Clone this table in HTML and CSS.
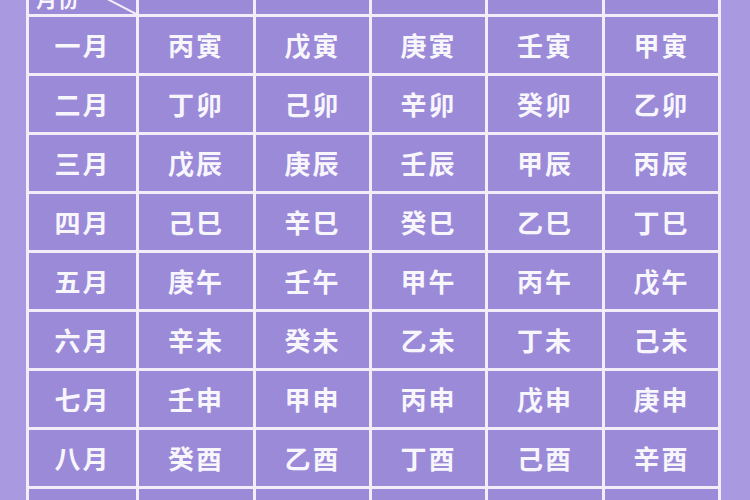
FILE: index.html
```html
<!DOCTYPE html>
<html lang="zh">
<head>
<meta charset="utf-8">
<title>月干表</title>
<link rel="stylesheet" href="styles.css">
</head>
<body>
<div class="table">
  <div class="cell head corner">
    <svg class="diag" viewBox="0 0 100 100" preserveAspectRatio="none"><line x1="0" y1="0" x2="100" y2="100" vector-effect="non-scaling-stroke"/></svg>
    <span class="corner-label">月份</span>
  </div>
  <div class="cell head"></div><div class="cell head"></div><div class="cell head"></div><div class="cell head"></div><div class="cell head"></div>

  <div class="cell">一月</div><div class="cell">丙寅</div><div class="cell">戊寅</div><div class="cell">庚寅</div><div class="cell">壬寅</div><div class="cell">甲寅</div>
  <div class="cell">二月</div><div class="cell">丁卯</div><div class="cell">己卯</div><div class="cell">辛卯</div><div class="cell">癸卯</div><div class="cell">乙卯</div>
  <div class="cell">三月</div><div class="cell">戊辰</div><div class="cell">庚辰</div><div class="cell">壬辰</div><div class="cell">甲辰</div><div class="cell">丙辰</div>
  <div class="cell">四月</div><div class="cell">己巳</div><div class="cell">辛巳</div><div class="cell">癸巳</div><div class="cell">乙巳</div><div class="cell">丁巳</div>
  <div class="cell">五月</div><div class="cell">庚午</div><div class="cell">壬午</div><div class="cell">甲午</div><div class="cell">丙午</div><div class="cell">戊午</div>
  <div class="cell">六月</div><div class="cell">辛未</div><div class="cell">癸未</div><div class="cell">乙未</div><div class="cell">丁未</div><div class="cell">己未</div>
  <div class="cell">七月</div><div class="cell">壬申</div><div class="cell">甲申</div><div class="cell">丙申</div><div class="cell">戊申</div><div class="cell">庚申</div>
  <div class="cell">八月</div><div class="cell">癸酉</div><div class="cell">乙酉</div><div class="cell">丁酉</div><div class="cell">己酉</div><div class="cell">辛酉</div>
  <div class="cell"></div><div class="cell"></div><div class="cell"></div><div class="cell"></div><div class="cell"></div><div class="cell"></div>
</div>
</body>
</html>
```
FILE: styles.css
```css
html, body {
  margin: 0;
  padding: 0;
  overflow: hidden;
  height: 500px;
  background: #a899e0;
}

.table {
  display: grid;
  grid-template-columns: 107px 114px 113px 113px 114px 113px;
  grid-auto-rows: 56px;
  gap: 3px;
  padding: 3px;
  width: max-content;
  margin: -45px 0 0 26px;
  background: #f1eefa;
}

.cell {
  position: relative;
  display: flex;
  align-items: center;
  justify-content: center;
  background: #9b8ad8;
  color: #f8f6fd;
  font-family: "Noto Sans CJK SC", "Noto Sans", sans-serif;
  font-weight: 700;
  font-size: 26px;
  letter-spacing: 2px;
  line-height: 1;
}

.corner {
  justify-content: flex-start;
  align-items: flex-end;
  padding: 0 0 5px 7px;
  box-sizing: border-box;
}

.corner-label {
  font-size: 21px;
  letter-spacing: 1px;
}

.diag {
  position: absolute;
  left: 0;
  top: 0;
  width: 100%;
  height: 100%;
}

.diag line {
  stroke: #f1eefa;
  stroke-width: 2;
}
```
